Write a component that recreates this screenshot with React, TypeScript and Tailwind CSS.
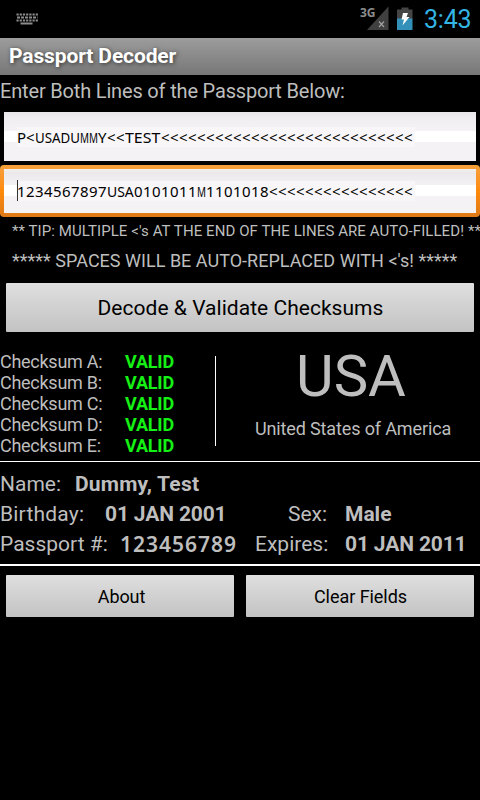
import type { ReactNode } from "react";

function KeyboardIcon() {
  return (
    <svg width="22" height="12" viewBox="0 0 22 12" fill="none" stroke="#8c8c8c">
      <path d="M0.5 1.5H22" strokeWidth="2" strokeDasharray="2.2 1" />
      <path d="M1 4.5H21.5" strokeWidth="2" strokeDasharray="3 1" />
      <path d="M0.5 7.5H22" strokeWidth="2" strokeDasharray="2.2 1" />
      <path d="M4.5 10.5H16.5" strokeWidth="2" />
    </svg>
  );
}

function SignalIcon() {
  return (
    <svg width="22" height="24" viewBox="0 0 22 24">
      <path d="M21.5 0.5V24H0Z" fill="#404040" />
      <path d="M12 15.5L17 21M17 15.5L12 21" stroke="#a0a0a0" strokeWidth="1.2" />
    </svg>
  );
}

function BatteryIcon() {
  return (
    <svg width="16" height="24" viewBox="0 0 16 24">
      <path d="M4.5 0.5H11.5V2.5H15.5V12H0V2.5H4.5Z" fill="#454545" />
      <path d="M0 11.5H15.5V23H0Z" fill="#3390b8" />
      <path d="M6 6H11L9.5 10H12.5L5.5 18.5L7 12.5H4.5Z" fill="#fff" />
    </svg>
  );
}

function StatusBar() {
  return (
    <div className="relative flex h-[38px] items-start pl-[16px]">
      <div className="pt-[13px]"><KeyboardIcon /></div>
      <span className="absolute left-[360px] top-[5px] font-['Open_Sans',sans-serif] text-[12px] leading-[16px] font-bold text-[#8c8c8c]">3G</span>
      <div className="ml-auto flex pr-[8px]">
        <div className="pt-[6px]"><SignalIcon /></div>
        <div className="ml-[8px] pt-[7px]"><BatteryIcon /></div>
        <span className="ml-[11px] w-[48px] pt-[5px] text-[25px] leading-[30px] tracking-[-0.2px] text-[#33b5e5] whitespace-nowrap">3:43</span>
      </div>
    </div>
  );
}

function Run({ children, className }: { children: ReactNode; className: string }) {
  return <span className={`inline-block origin-left tracking-normal ${className}`}>{children}</span>;
}

function Button({ children, className }: { children: ReactNode; className: string }) {
  return (
    <button className={`flex items-center justify-center rounded-[1px] bg-linear-to-b from-[#dfdfdf] to-[#c3c3c3] text-black whitespace-nowrap ${className}`}>
      {children}
    </button>
  );
}

const upperFill =
  "bg-[linear-gradient(to_bottom,#e9e7ea_0px,#f1eff1_8px,#f5f2f5_19px,#ffffff_19px,#ffffff_30px,#f5f2f5_30px,#f5f2f5_100%)]";
const lowerFill =
  "bg-[linear-gradient(to_bottom,#f3eeeb_0px,#ebe9eb_4px,#f3f1f3_16px,#ffffff_16px,#ffffff_27px,#f5f2f5_27px,#f5f2f5_100%)]";
const fieldText = "font-['Noto_Sans',sans-serif] text-[15px] tracking-[0.42px] leading-[20px] text-black whitespace-nowrap";

export default function App() {
  return (
    <div className="h-[800px] w-[480px] overflow-hidden bg-black font-['Roboto',sans-serif] text-[#bebebe]">
      <StatusBar />
      <header className="flex h-[37px] items-center bg-linear-to-b from-[#9c9c9c] to-[#777777] pl-[9px]">
        <h1 className="text-[21px] leading-[25px] font-bold tracking-[-0.12px] text-white whitespace-nowrap [text-shadow:1px_1px_4px_#333]">Passport Decoder</h1>
      </header>
      <p className="h-[37px] pt-[4px] text-[20px] leading-[25px] tracking-[-0.17px] whitespace-nowrap">Enter Both Lines of the Passport Below:</p>

      <div className={`mx-[4px] h-[49px] pl-[13px] pt-[15px] ${upperFill} ${fieldText}`}>
        <div className="h-[20px] w-[398px] bg-[#f8f6f8]">
          <Run className="w-[9px]">P</Run>&lt;<Run className="w-[45px] scale-x-[0.888]">USADU</Run><Run className="w-[18px] scale-x-[0.66]">MM</Run><Run className="w-[9px]">Y</Run>&lt;&lt;<Run className="w-[36px] scale-x-[1.06]">TEST</Run>{"<".repeat(28)}
        </div>
      </div>
      <div className="mt-[4px] h-[52px] rounded-[4px] bg-linear-to-b from-[#f5a03a] via-[#ff8a08] to-[#dd7918] p-[4px]">
        <div className={`relative h-[44px] pl-[13px] pt-[12px] ${lowerFill} ${fieldText}`}>
          <span className="absolute left-[13px] top-[11px] h-[21px] w-px bg-black" />
          <div className="h-[20px] w-[398px] bg-[#f8f6f8]">
            1234567897<Run className="w-[27px] scale-x-[0.93]">USA</Run>0101011<Run className="w-[9px] scale-x-[0.66]">M</Run>1101018{"<".repeat(16)}
          </div>
          <span className="absolute left-[13px] top-[11px] h-[21px] w-px bg-[#333]" />
        </div>
      </div>

      <p className="h-[31px] pl-[12px] pt-[4px] text-[15px] leading-[20px] tracking-[0.08px] whitespace-nowrap">** TIP: MULTIPLE &lt;'s AT THE END OF THE LINES ARE AUTO-FILLED! **</p>
      <p className="h-[35px] pl-[12px] pt-[2px] text-[18px] leading-[22px] tracking-[0.02px] whitespace-nowrap">***** SPACES WILL BE AUTO-REPLACED WITH &lt;'s! *****</p>
      <Button className="mx-[6px] h-[49px] w-[468px] pl-px pt-[2px] text-[21px] tracking-[0.03px]">Decode &amp; Validate Checksums</Button>

      <section className="flex h-[130px] border-b border-white">
        <div className="w-[215px] pt-[19px] text-[18px] leading-[21px]">
          {["A", "B", "C", "D", "E"].map((name) => (
            <div key={name} className="flex whitespace-nowrap">
              <span className="w-[125px] tracking-[-0.27px]">Checksum {name}:</span>
              <span className="font-bold tracking-[-0.2px] text-[#15f015]">VALID</span>
            </div>
          ))}
        </div>
        <div className="mt-[24px] h-[90px] w-px bg-white" />
        <div className="ml-[10px] w-[254px] text-center">
          <div className="pr-[4px] pt-[12px] text-[58px] leading-[64px]">USA</div>
          <div className="pt-[10px] text-[18px] leading-[22px] tracking-[-0.13px] whitespace-nowrap">United States of America</div>
        </div>
      </section>

      <section className="h-[104px] border-b-2 border-white pt-[7px] text-[21px] leading-[30px] whitespace-nowrap">
        <div className="flex">
          <span className="w-[75px]">Name:</span>
          <b className="tracking-[0.2px]">Dummy, Test</b>
        </div>
        <div className="flex">
          <span className="w-[105px] tracking-[0.2px]">Birthday:</span>
          <b className="w-[183px] tracking-[-0.15px]">01 JAN 2001</b>
          <span className="w-[57px]">Sex:</span>
          <b>Male</b>
        </div>
        <div className="flex">
          <span className="w-[120px]">Passport #:</span>
          <b className="w-[135px] font-['Noto_Sans',sans-serif] text-[21px] font-semibold tracking-[1px]">123456789</b>
          <span className="w-[90px]">Expires:</span>
          <b className="tracking-[-0.15px]">01 JAN 2011</b>
        </div>
      </section>

      <div className="flex gap-[12px] px-[6px] pt-[9px]">
        <Button className="h-[42px] w-[228px] pl-[3px] pt-px text-[18px] tracking-[-0.1px]">About</Button>
        <Button className="h-[42px] w-[228px] pl-px pt-px text-[18px] tracking-[-0.05px]">Clear Fields</Button>
      </div>
    </div>
  );
}
